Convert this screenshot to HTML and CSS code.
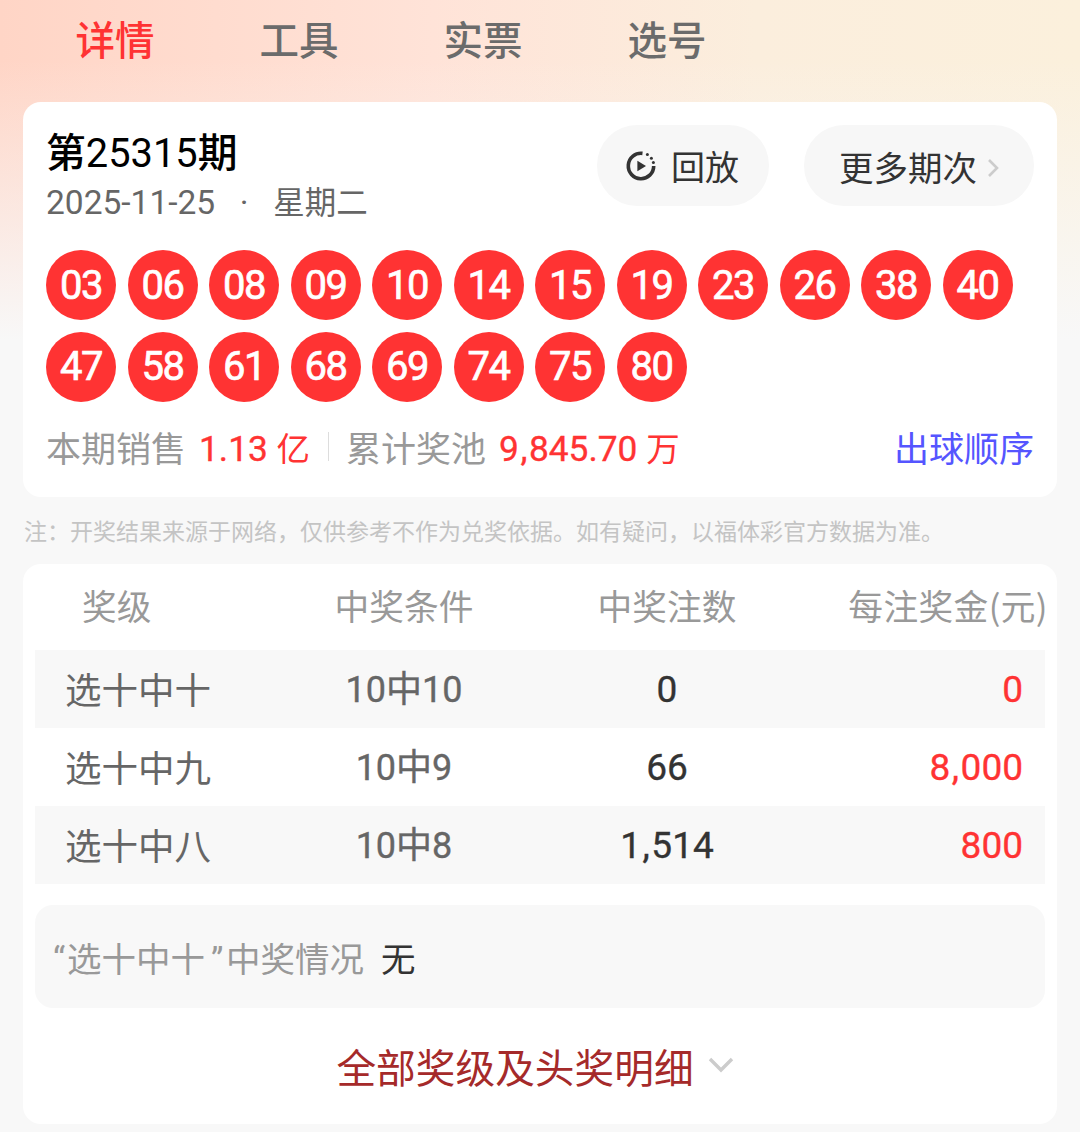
FILE: index.html
```html
<!DOCTYPE html>
<html lang="zh-CN">
<head>
<meta charset="utf-8">
<title>第25315期</title>
<link rel="stylesheet" href="styles.css">
</head>
<body>
<div class="page">
  <nav class="tabs">
    <span class="tab active">详情</span>
    <span class="tab">工具</span>
    <span class="tab">实票</span>
    <span class="tab">选号</span>
  </nav>

  <section class="card draw">
    <div class="draw-head">
      <div class="draw-title">
        <h1><span class="cjk">第</span>25315<span class="cjk">期</span></h1>
        <p>2025-11-25<span class="dot">·</span><span class="weekday">星期二</span></p>
      </div>
      <div class="draw-actions">
        <button class="pill replay">
          <svg class="replay-icon" viewBox="0 0 32 32" width="32" height="32" aria-hidden="true">
            <path d="M17.5 3.4A12.7 12.7 0 1 0 28.7 16" fill="none" stroke="#333" stroke-width="3.6"/>
            <path d="M12.4 10.8v10.4l8.6-5.2z" fill="#333"/>
            <circle cx="22.4" cy="4.6" r="1.5" fill="#333"/>
            <circle cx="26.4" cy="8.2" r="1.5" fill="#333"/>
            <circle cx="28.4" cy="12.4" r="1.5" fill="#333"/>
          </svg>
          回放
        </button>
        <button class="pill more">更多期次
          <svg class="chev-right" viewBox="0 0 12 20" width="12" height="20" aria-hidden="true">
            <path d="M2 2l8 8-8 8" fill="none" stroke="#ccc" stroke-width="2.6"/>
          </svg>
        </button>
      </div>
    </div>

    <div class="balls">
      <span class="ball">03</span><span class="ball">06</span><span class="ball">08</span><span class="ball">09</span><span class="ball">10</span><span class="ball">14</span><span class="ball">15</span><span class="ball">19</span><span class="ball">23</span><span class="ball">26</span><span class="ball">38</span><span class="ball">40</span>
      <span class="ball">47</span><span class="ball">58</span><span class="ball">61</span><span class="ball">68</span><span class="ball">69</span><span class="ball">74</span><span class="ball">75</span><span class="ball">80</span>
    </div>

    <div class="stats">
      <span class="stat-label">本期销售</span>
      <span class="stat-value">1.13 <span class="unit">亿</span></span>
      <span class="divider"></span>
      <span class="stat-label">累计奖池</span>
      <span class="stat-value">9<span class="comma">,</span>845.70 <span class="unit">万</span></span>
      <a class="order">出球顺序</a>
    </div>
  </section>

  <p class="note">注：开奖结果来源于网络，仅供参考不作为兑奖依据。如有疑问，以福体彩官方数据为准。</p>

  <section class="card prizes">
    <div class="row head">
      <span class="c1">奖级</span><span class="c2">中奖条件</span><span class="c3">中奖注数</span><span class="c4">每注奖金(元)</span>
    </div>
    <div class="row striped">
      <span class="c1">选十中十</span><span class="c2 num">10中10</span><span class="c3 num strong">0</span><span class="c4 num red">0</span>
    </div>
    <div class="row">
      <span class="c1">选十中九</span><span class="c2 num">10中9</span><span class="c3 num strong">66</span><span class="c4 num red">8<span class="comma">,</span>000</span>
    </div>
    <div class="row striped">
      <span class="c1">选十中八</span><span class="c2 num">10中8</span><span class="c3 num strong">1<span class="comma">,</span>514</span><span class="c4 num red">800</span>
    </div>

    <div class="winner">
      <span class="winner-label"><span class="quote">“</span>选十中十<span class="quote close">”</span>中奖情况</span>
      <span class="winner-value">无</span>
    </div>

    <div class="all">全部奖级及头奖明细
      <svg viewBox="0 0 26 16" width="26" height="16" aria-hidden="true">
        <path d="M2 2l11 11L24 2" fill="none" stroke="#ccc" stroke-width="3.4"/>
      </svg>
    </div>
  </section>
</div>
</body>
</html>
```
FILE: styles.css
```css
* { box-sizing: border-box; }
html, body { margin: 0; padding: 0; }
body {
  width: 1080px;
  height: 1132px;
  overflow: hidden;
  font-family: "Noto Sans CJK SC", "Noto Sans", sans-serif;
  background: #f8f8f8;
}
.page {
  height: 1132px;
  padding: 0 23px;
  background:
    linear-gradient(to bottom, rgba(248,248,248,0) 0, rgba(248,248,248,0) 60px, #f8f8f8 340px),
    linear-gradient(to right, #ffd5c6 0, #ffe3d8 40%, #fbeedd 70%, #fbf0dc 100%);
}
.tabs { display: flex; height: 102px; padding-bottom: 26px; align-items: center; }
.tab {
  width: 184px;
  text-align: center;
  font-size: 39.5px;
  line-height: 1;
  font-weight: 500;
  color: #6b6b6b;
}
.tab.active { color: #ff3333; }
.card { background: #fff; border-radius: 18px; }
.draw { height: 395px; padding: 23px 23px 0; }
.draw-head { display: flex; justify-content: space-between; height: 125px; }
.draw-title h1 {
  margin: 1px 0 0;
  font-size: 39.8px;
  line-height: 56px;
  font-weight: 400;
  color: #000;
  font-family: Roboto, "Noto Sans CJK SC", sans-serif;
}
.cjk { font-weight: 500; }
.draw-title p {
  margin: 1px 0 0;
  font-size: 33.5px;
  line-height: 40px;
  color: #666;
  font-family: Roboto, "Noto Sans CJK SC", sans-serif;
}
.weekday { font-size: 31.5px; }
.dot { display: inline-block; width: 58px; text-align: center; }
.draw-actions { display: flex; gap: 35px; align-items: flex-start; }
.pill {
  display: flex;
  align-items: center;
  height: 81px;
  padding-bottom: 1px;
  border: 0;
  border-radius: 40px;
  background: #f7f7f7;
  font: inherit;
  font-size: 34.5px;
  color: #333;
}
.replay { width: 172px; padding-left: 28px; padding-right: 0; gap: 14px; font-size: 34px; }
.more { width: 230px; padding-left: 35px; padding-right: 0; gap: 10px; }
.chev-right { margin-top: 4px; }
.balls { display: flex; flex-wrap: wrap; gap: 11.5px; }
.ball {
  width: 70px;
  height: 70px;
  border-radius: 50%;
  background: #ff3333;
  color: #fff;
  display: flex;
  align-items: center;
  justify-content: center;
  font-family: Roboto, sans-serif;
  font-size: 40px;
  font-weight: 400;
  -webkit-text-stroke: 0.7px #fff;
  letter-spacing: -1.6px;
}
.stats {
  display: flex;
  align-items: center;
  margin-top: 21px;
  height: 48px;
  font-size: 35px;
}
.stat-label { color: #999; }
.stat-value {
  color: #ff3333;
  margin-left: 13px;
  font-size: 35.3px;
  font-weight: 400;
  -webkit-text-stroke: 0.35px #ff3333;
  font-family: Roboto, "Noto Sans CJK SC", sans-serif;
}
.unit { font-size: 33.5px; -webkit-text-stroke: 0; }
.comma { margin: 0 1.5px; }
.divider { width: 1px; height: 29px; background: #ddd; margin: 0 17.5px; }
.order { margin-left: auto; color: #5555ff; }
.note {
  margin: 0;
  height: 67px;
  line-height: 66px;
  padding-left: 1px;
  font-size: 23px;
  color: #c4c4c4;
  white-space: nowrap;
}
.prizes { height: 560px; padding: 0 12px; }
.row {
  display: grid;
  grid-template-columns: 205px 328px 198px 1fr;
  align-items: baseline;
  height: 78px;
  line-height: 80px;
  font-size: 36.5px;
  color: #666;
}
.row.head { height: 86px; line-height: 82px; font-size: 34.7px; color: #999; }
.row.striped { background: #f8f8f8; }
.c1 { padding-left: 30px; align-self: start; line-height: 78px; }
.head .c1 { padding-left: 47px; line-height: 82px; }
.c2, .c3 { text-align: center; }
.c4 { text-align: right; padding-right: 22px; }
.head .c4 { padding-right: 0; margin-right: -3px; white-space: nowrap; letter-spacing: 0.4px; }
.num {
  font-family: Roboto, "Noto Sans CJK SC", sans-serif;
  font-size: 36px;
  font-weight: 400;
  -webkit-text-stroke: 0.35px currentColor;
}
.c3.num, .c4.num { font-size: 37px; }
.strong { color: #333; }
.red { color: #ff3333; }
.winner {
  display: flex;
  align-items: center;
  height: 103px;
  margin-top: 21px;
  padding-left: 18px;
  border-radius: 18px;
  background: #f8f8f8;
  font-size: 34.5px;
}
.winner-label { color: #999; }
.quote {
  display: inline-block;
  width: 14px;
  font-family: Roboto, sans-serif;
}
.quote.close { width: 21px; padding-left: 6px; }
.winner-value { color: #333; margin-left: 17px; }
.all {
  display: flex;
  align-items: center;
  justify-content: center;
  gap: 14px;
  height: 114px;
  padding-right: 10px;
  font-size: 39.7px;
  color: #a52a2a;
}
```
